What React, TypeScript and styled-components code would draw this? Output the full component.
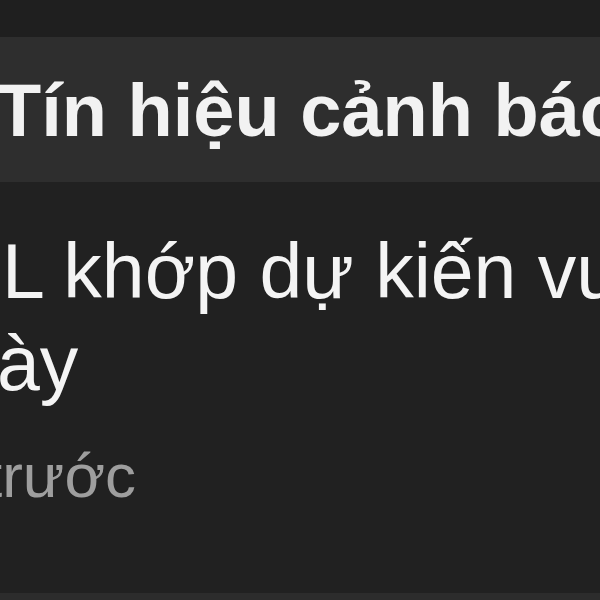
import styled, { createGlobalStyle } from 'styled-components'

const Global = createGlobalStyle`
    html, body {
        margin: 0;
        padding: 0;
        background: #212121;
    }
    body {
        font-family: "Liberation Sans", Arial, sans-serif;
        -webkit-font-smoothing: antialiased;
    }
`

// 画面全体
const Screen = styled.div`
    width: 600px;
    height: 600px;
    overflow: hidden;
    display: flex;
    flex-direction: column;
    background: #212121;
`

const TopStrip = styled.div`
    height: 37px;
    flex-shrink: 0;
    background: #1f1f1f;
`

const Header = styled.div`
    flex-shrink: 0;
    height: 145px;
    box-sizing: border-box;
    padding: 29px 0 0 0;
    background: #2e2e2e;
    overflow: hidden;
`

const Title = styled.h2`
    margin: 0 0 0 -4px;
    font-size: 74px;
    line-height: 89px;
    font-weight: 700;
    color: #f2f2f2;
    white-space: nowrap;
`

const Body = styled.div`
    flex-shrink: 0;
    height: 411px;
    box-sizing: border-box;
    padding-top: 43px;
    overflow: hidden;
`

const Line = styled.div<{ $shift: number }>`
    margin-left: ${p => p.$shift}px;
    font-size: 77px;
    line-height: 92px;
    color: #f4f4f4;
    white-space: nowrap;
`

const Time = styled.div`
    margin: 28px 0 0 -15px;
    font-size: 62px;
    line-height: 77px;
    color: #9e9e9e;
    white-space: nowrap;
`

const NextRow = styled.div`
    flex: 1;
    background: #2c2c2c;
`

export default function App() {
    return (
        <Screen>
            <Global />
            <TopStrip />
            <Header>
                <Title>Tín hiệu cảnh báo</Title>
            </Header>
            <Body>
                <Line $shift={2}>L khớp dự kiến vượt</Line>
                <Line $shift={-3}>ày</Line>
                <Time>trước</Time>
            </Body>
            <NextRow />
        </Screen>
    )
}
